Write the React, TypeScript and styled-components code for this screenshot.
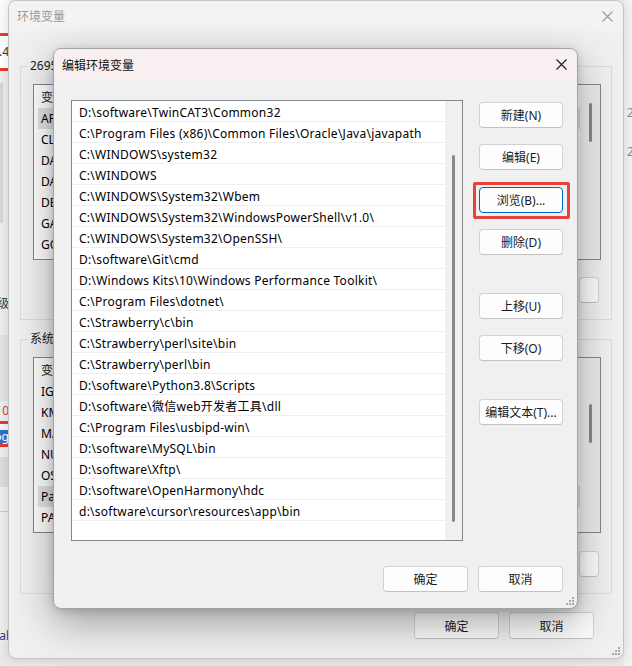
import React from 'react';
import styled, { createGlobalStyle } from 'styled-components';

const FONT = `"Noto Sans", "Noto Sans CJK SC", sans-serif`;

const GlobalStyle = createGlobalStyle`
  html, body { margin: 0; padding: 0; background: #ececec; overflow: hidden; }
  body { font-family: ${FONT}; }
  * { box-sizing: border-box; }
`;

const Desktop = styled.div`
  position: relative;
  width: 632px;
  height: 666px;
  overflow: hidden;
  background: #ebebeb;
  font-family: ${FONT};
  font-size: 12px;
  color: #000;
`;

/* ---------- peeking windows at the edges ---------- */
const LeftPeek = styled.div`
  position: absolute;
  left: 0;
  top: 0;
  width: 9px;
  height: 666px;
  overflow: hidden;
  display: flex;
  flex-direction: column;
  background: #e9e9e9;
`;

const Band = styled.div<{ $h: number; $bg: string; $color?: string }>`
  flex: 0 0 ${p => p.$h}px;
  height: ${p => p.$h}px;
  background: ${p => p.$bg};
  color: ${p => p.$color || '#333'};
  display: flex;
  align-items: center;
  justify-content: flex-end;
  white-space: nowrap;
  overflow: hidden;
  font-size: 12px;
  line-height: 1;
`;

const RightPeek = styled.div`
  position: absolute;
  left: 624px;
  top: 0;
  width: 8px;
  height: 666px;
  background: #f1f1f1;
  display: flex;
  flex-direction: column;
  padding-top: 104px;
  gap: 21px;
  color: #8a8a8a;
  font-size: 12px;
  line-height: 18px;
  overflow: hidden;
`;

const PeekDigit = styled.span`
  display: block;
  padding-left: 3px;
`;

/* ---------- background window 环境变量 ---------- */
const BgWindow = styled.div`
  position: absolute;
  left: 8px;
  top: 0;
  width: 616px;
  height: 659px;
  background: #f0f0f0;
  border: 1px solid #c4c4c4;
  border-radius: 8px;
  box-shadow: 0 2px 10px rgba(0, 0, 0, 0.12);
  display: flex;
  flex-direction: column;
  overflow: hidden;
`;

const BgTitleBar = styled.div`
  height: 30px;
  flex: 0 0 30px;
  display: flex;
  align-items: center;
  justify-content: space-between;
  padding: 0 10px 0 8px;
  background: #f3f3f3;
  color: #9a9a9a;
  font-size: 12px;
`;

const BgBody = styled.div`
  padding: 0 11px 0 11px;
  display: flex;
  flex-direction: column;
`;

const Group = styled.fieldset<{ $top: number }>`
  margin: ${p => p.$top}px 0 0 0;
  padding: 10px 10px 16px 12px;
  border: 1px solid #dcdcdc;
  min-width: 0;
  display: flex;
  flex-direction: column;
`;

const GroupLabel = styled.legend`
  margin-left: -5px;
  padding: 0 2px;
  font-size: 12px;
  line-height: 16px;
  color: #1a1a1a;
`;

const BgList = styled.div`
  height: 176px;
  border: 1px solid #828790;
  background: #fff;
  display: flex;
`;

const BgListBody = styled.div`
  flex: 1;
  display: flex;
  flex-direction: column;
`;

const BgHeader = styled.div`
  height: 23px;
  flex: 0 0 23px;
  display: flex;
  align-items: center;
  padding-left: 7px;
  color: #1a1a1a;
`;

const BgRow = styled.div<{ $sel?: boolean }>`
  height: 21px;
  flex: 0 0 21px;
  display: flex;
  align-items: center;
  padding-left: 3px;
  margin-left: 4px;
  background: ${p => (p.$sel ? '#e3e3e3' : 'transparent')};
  white-space: nowrap;
  overflow: hidden;
`;

const BgScroll = styled.div<{ $thumbTop: number }>`
  width: 20px;
  flex: 0 0 20px;
  background: linear-gradient(to right, #f4f4f4, #e9e9e9);
  display: flex;
  justify-content: center;
  padding-top: ${p => p.$thumbTop}px;
`;

const Thumb = styled.div<{ $h: number }>`
  width: 3px;
  height: ${p => p.$h}px;
  border-radius: 2px;
  background: #8a8a8a;
`;

const ButtonRow = styled.div<{ $top: number; $right: number }>`
  display: flex;
  justify-content: flex-end;
  gap: 10px;
  margin-top: ${p => p.$top}px;
  padding-right: ${p => p.$right}px;
`;

const WinButton = styled.button<{ $w: number; $h?: number; $focus?: boolean }>`
  width: ${p => p.$w}px;
  height: ${p => p.$h || 26}px;
  flex: 0 0 auto;
  margin: 0;
  padding: 0;
  background: #fdfdfd;
  border: 1px solid ${p => (p.$focus ? '#0067c0' : '#d2d2d2')};
  border-bottom-color: ${p => (p.$focus ? '#0067c0' : '#c2c2c2')};
  border-radius: 4px;
  font-family: ${FONT};
  font-size: 12px;
  color: #1b1b1b;
  display: flex;
  align-items: center;
  justify-content: center;
  white-space: nowrap;
`;

const BgFooter = styled.div`
  display: flex;
  justify-content: flex-end;
  gap: 10px;
  margin-top: 18px;
  padding-right: 18px;
`;

const Grip = styled.svg`
  position: absolute;
  right: 3px;
  bottom: 3px;
`;

/* ---------- foreground dialog 编辑环境变量 ---------- */
const Dialog = styled.div`
  position: absolute;
  left: 53px;
  top: 48px;
  width: 525px;
  height: 561px;
  background: #f0f0f0;
  border: 1px solid #a3a3a3;
  border-radius: 8px;
  box-shadow: 0 14px 40px rgba(0, 0, 0, 0.34), 0 2px 8px rgba(0, 0, 0, 0.16);
  display: flex;
  flex-direction: column;
  overflow: hidden;
`;

const DlgTitleBar = styled.div`
  height: 31px;
  flex: 0 0 31px;
  display: flex;
  align-items: center;
  justify-content: space-between;
  padding: 0 10px 0 8px;
  background: #f8f0f0;
  color: #111;
  font-size: 12px;
`;

const DlgBody = styled.div`
  flex: 1;
  display: flex;
  flex-direction: column;
  padding: 20px 14px 16px 17px;
`;

const DlgMain = styled.div`
  display: flex;
  gap: 16px;
`;

const PathList = styled.div`
  width: 392px;
  height: 441px;
  border: 1px solid #828790;
  background: #fff;
  display: flex;
`;

const PathRows = styled.div`
  flex: 1;
  display: flex;
  flex-direction: column;
`;

const PathRow = styled.div`
  height: 21px;
  flex: 0 0 21px;
  border-bottom: 1px solid #efefef;
  padding: 2px 0 0 7px;
  display: flex;
  align-items: center;
  white-space: nowrap;
  overflow: hidden;
  letter-spacing: 0.25px;
  color: #000;
`;

const PathScroll = styled.div`
  width: 17px;
  flex: 0 0 17px;
  background: #f0f0f0;
  display: flex;
  justify-content: center;
  padding-top: 54px;
`;

const SideButtons = styled.div`
  width: 84px;
  display: flex;
  flex-direction: column;
  gap: 16.3px;
  padding-top: 2px;
`;

const SideSlot = styled.div<{ $extra?: boolean }>`
  position: relative;
  margin-top: ${p => (p.$extra ? 21.6 : 0)}px;
`;

const Annotation = styled.div`
  position: absolute;
  left: -6px;
  right: -7px;
  top: -5px;
  bottom: -6px;
  border: 3px solid #e8423a;
  border-radius: 2px;
  pointer-events: none;
`;

const DlgFooter = styled.div`
  display: flex;
  justify-content: flex-end;
  gap: 10px;
  margin-top: 25px;
`;

const CloseIcon: React.FC<{ color: string }> = ({ color }) => (
  <svg width="11" height="11" viewBox="0 0 11 11">
    <path d="M0.5 0.5 L10.5 10.5 M10.5 0.5 L0.5 10.5" stroke={color} strokeWidth="1.1" fill="none" />
  </svg>
);

const GripIcon: React.FC = () => (
  <Grip width="8" height="8" viewBox="0 0 8 8">
    {[
      [6, 0],
      [6, 3],
      [3, 3],
      [6, 6],
      [3, 6],
      [0, 6],
    ].map(([x, y], i) => (
      <rect key={i} x={x} y={y} width="2" height="2" fill="#a8a8a8" />
    ))}
  </Grip>
);

const PATHS = [
  'D:\\software\\TwinCAT3\\Common32',
  'C:\\Program Files (x86)\\Common Files\\Oracle\\Java\\javapath',
  'C:\\WINDOWS\\system32',
  'C:\\WINDOWS',
  'C:\\WINDOWS\\System32\\Wbem',
  'C:\\WINDOWS\\System32\\WindowsPowerShell\\v1.0\\',
  'C:\\WINDOWS\\System32\\OpenSSH\\',
  'D:\\software\\Git\\cmd',
  'D:\\Windows Kits\\10\\Windows Performance Toolkit\\',
  'C:\\Program Files\\dotnet\\',
  'C:\\Strawberry\\c\\bin',
  'C:\\Strawberry\\perl\\site\\bin',
  'C:\\Strawberry\\perl\\bin',
  'D:\\software\\Python3.8\\Scripts',
  'D:\\software\\微信web开发者工具\\dll',
  'C:\\Program Files\\usbipd-win\\',
  'D:\\software\\MySQL\\bin',
  'D:\\software\\Xftp\\',
  'D:\\software\\OpenHarmony\\hdc',
  'd:\\software\\cursor\\resources\\app\\bin',
];

const USER_VARS = ['APPDATA', 'CLASSPATH', 'DASHSCOPE', 'DATA_DIR', 'DEEPSEEK', 'GATEWAY', 'GOPATH'];
const SYS_VARS = ['IGCCSVC_DB', 'KMP_LIB', 'MAVEN_HOME', 'NUMBER', 'OS', 'Path', 'PATHEXT'];

const SIDE = [
  { label: '新建(N)' },
  { label: '编辑(E)' },
  { label: '浏览(B)...', focus: true },
  { label: '删除(D)' },
  { label: '上移(U)', extra: true },
  { label: '下移(O)' },
  { label: '编辑文本(T)...', extra: true },
];

const VarList: React.FC<{ names: string[]; sel: number; thumbTop: number }> = ({ names, sel, thumbTop }) => (
  <BgList>
    <BgListBody>
      <BgHeader>变量</BgHeader>
      {names.map((n, i) => (
        <BgRow key={n} $sel={i === sel}>
          {n}
        </BgRow>
      ))}
    </BgListBody>
    <BgScroll $thumbTop={thumbTop}>
      <Thumb $h={39} />
    </BgScroll>
  </BgList>
);

export default function App() {
  return (
    <Desktop>
      <GlobalStyle />

      <LeftPeek>
        <Band $h={33} $bg="#fafafa" />
        <Band $h={3} $bg="#e5392f" />
        <Band $h={32} $bg="#ffffff">2.4</Band>
        <Band $h={3} $bg="#e5392f" />
        <Band $h={12} $bg="#ececec" />
        <Band $h={140} $bg="linear-gradient(to right, #d4d4d4 0 3px, #ececec 3px)" />
        <Band $h={72} $bg="#ececec" />
        <Band $h={18} $bg="#ececec">高级</Band>
        <Band $h={22} $bg="#ececec" />
        <Band $h={66} $bg="#e2e2e2" />
        <Band $h={20} $bg="#ececec" $color="#e5392f">0</Band>
        <Band $h={3} $bg="#e5392f" />
        <Band $h={6} $bg="#f4f4f4" />
        <Band $h={14} $bg="#2f6fd1" $color="#fff">log</Band>
        <Band $h={3} $bg="#e5392f" />
        <Band $h={10} $bg="#ececec" />
        <Band $h={30} $bg="#dadada" />
        <Band $h={24} $bg="#ececec" />
        <Band $h={1} $bg="#c8c8c8" />
        <Band $h={115} $bg="#ececec" />
        <Band $h={18} $bg="#ececec" $color="#1a3d8f">al</Band>
      </LeftPeek>

      <RightPeek>
        <PeekDigit>2</PeekDigit>
        <PeekDigit>2</PeekDigit>
      </RightPeek>

      <BgWindow>
        <BgTitleBar>
          <span>环境变量</span>
          <CloseIcon color="#9c9c9c" />
        </BgTitleBar>
        <BgBody>
          <Group $top={27}>
            <GroupLabel>2695的用户变量(U)</GroupLabel>
            <VarList names={USER_VARS} sel={0} thumbTop={18} />
            <ButtonRow $top={17} $right={2}>
              <WinButton $w={84}>新建(N)...</WinButton>
              <WinButton $w={84}>编辑(E)...</WinButton>
              <WinButton $w={20}></WinButton>
            </ButtonRow>
          </Group>
          <Group $top={11}>
            <GroupLabel>系统变量(S)</GroupLabel>
            <VarList names={SYS_VARS} sel={5} thumbTop={46} />
            <ButtonRow $top={18} $right={2}>
              <WinButton $w={84}>新建(W)...</WinButton>
              <WinButton $w={84}>编辑(I)...</WinButton>
              <WinButton $w={20}></WinButton>
            </ButtonRow>
          </Group>
          <BgFooter>
            <WinButton $w={85} $h={27}>确定</WinButton>
            <WinButton $w={85} $h={27}>取消</WinButton>
          </BgFooter>
        </BgBody>
        <GripIcon />
      </BgWindow>

      <Dialog>
        <DlgTitleBar>
          <span>编辑环境变量</span>
          <CloseIcon color="#1a1a1a" />
        </DlgTitleBar>
        <DlgBody>
          <DlgMain>
            <PathList>
              <PathRows>
                {PATHS.map(p => (
                  <PathRow key={p}>{p}</PathRow>
                ))}
              </PathRows>
              <PathScroll>
                <Thumb $h={367} />
              </PathScroll>
            </PathList>
            <SideButtons>
              {SIDE.map(b => (
                <SideSlot key={b.label} $extra={b.extra}>
                  <WinButton $w={84} $focus={b.focus}>
                    {b.label}
                  </WinButton>
                  {b.focus && <Annotation />}
                </SideSlot>
              ))}
            </SideButtons>
          </DlgMain>
          <DlgFooter>
            <WinButton $w={85}>确定</WinButton>
            <WinButton $w={85}>取消</WinButton>
          </DlgFooter>
        </DlgBody>
        <GripIcon />
      </Dialog>
    </Desktop>
  );
}
